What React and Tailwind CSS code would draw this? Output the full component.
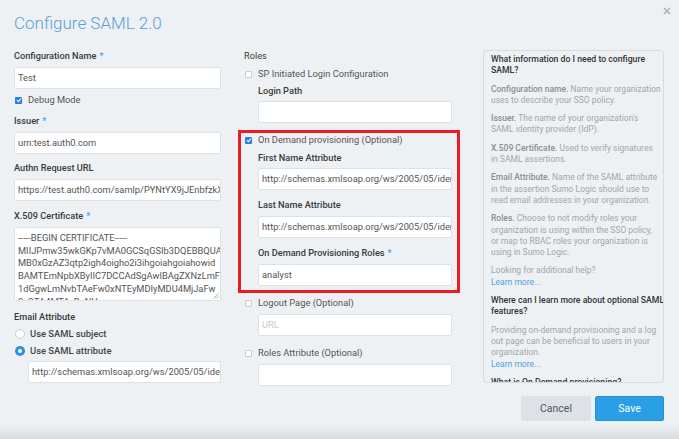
import React from 'react';

const font = { fontFamily: 'Roboto, "Liberation Sans", sans-serif' };

function Label({ children, required, className = '' }) {
  return (
    <div className={`h-[12px] leading-[12px] text-[9.2px] font-medium text-[#3a3a3a] whitespace-nowrap ${className}`}>
      {children}
      {required && <span className="text-[#4aa3e8] ml-[3px]">*</span>}
    </div>
  );
}

function Input({ value, placeholder, className = '' }) {
  return (
    <div className={`h-[22px] bg-white border border-[#dde2e6] rounded-[2px] px-[3px] flex items-center overflow-hidden ${className}`}>
      {value ? (
        <span className="text-[9.3px] text-[#555] whitespace-nowrap">{value}</span>
      ) : (
        <span className="text-[9.3px] text-[#c8cbce] whitespace-nowrap">{placeholder}</span>
      )}
    </div>
  );
}

function Check({ checked, children, className = '' }) {
  return (
    <div className={`h-[12px] flex items-center gap-[6px] ${className}`}>
      {checked ? (
        <span className="w-[7px] h-[7px] rounded-[1px] bg-[#2d7fe3] flex items-center justify-center">
          <svg width="6" height="6" viewBox="0 0 6 6">
            <path d="M1 3.2 L2.4 4.6 L5 1.5" stroke="white" strokeWidth="1.1" fill="none" />
          </svg>
        </span>
      ) : (
        <span className="w-[7px] h-[7px] rounded-[1px] bg-white border border-[#c9cdd1]" />
      )}
      <span className="text-[9.3px] text-[#555] leading-[12px] whitespace-nowrap">{children}</span>
    </div>
  );
}

function Radio({ checked, children, className = '' }) {
  return (
    <div className={`h-[12px] flex items-center gap-[5px] pl-[1px] ${className}`}>
      {checked ? (
        <span className="w-[10px] h-[10px] rounded-full bg-[#2d8fe8] flex items-center justify-center">
          <span className="w-[4px] h-[4px] rounded-full bg-white" />
        </span>
      ) : (
        <span className="w-[10px] h-[10px] rounded-full bg-white border border-[#c9cdd1]" />
      )}
      <span className="text-[9.4px] font-medium text-[#444] leading-[12px] whitespace-nowrap">{children}</span>
    </div>
  );
}

const SCHEMA = 'http://schemas.xmlsoap.org/ws/2005/05/identity/claims/name';

function LeftColumn() {
  return (
    <div className="w-[207px] flex flex-col">
      <Label required>Configuration Name</Label>
      <Input value="Test" className="mt-[5px]" />
      <Check checked className="mt-[5px] ml-[1px]">Debug Mode</Check>
      <Label required className="mt-[9px]">Issuer</Label>
      <Input value="urn:test.auth0.com" className="mt-[5px]" />
      <Label className="mt-[8px]">Authn Request URL</Label>
      <Input value="https://test.auth0.com/samlp/PYNtYX9jJEnbfzkXyZ" className="mt-[5px]" />
      <Label required className="mt-[9px]">X.509 Certificate</Label>
      <div className="relative mt-[5px] h-[74px] bg-white border border-[#dde2e6] rounded-[2px] pl-[3px] pt-[4px] overflow-hidden">
        <div className="text-[9.3px] leading-[12.7px] text-[#555] whitespace-nowrap">
          -----BEGIN CERTIFICATE-----<br />
          MIIJPmw35wkGKp7vMA0GCSqGSIb3DQEBBQUA<br />
          MB0xGzAZ3qtp2igh4oigho2i3ihgoiahgoiahowid<br />
          BAMTEmNpbXByIIC7DCCAdSgAwIBAgZXNzLmF<br />
          1dGgwLmNvbTAeFw0xNTEyMDIyMDU4MjJaFw<br />
          0yOTA4MTAyBgNV
        </div>
        <svg className="absolute right-[1px] bottom-[1px]" width="6" height="6" viewBox="0 0 6 6">
          <path d="M0.5 5.5 L5.5 0.5 M3 5.5 L5.5 3" stroke="#999" strokeWidth="0.8" />
        </svg>
      </div>
      <Label className="mt-[10px]">Email Attribute</Label>
      <Radio className="mt-[5px]">Use SAML subject</Radio>
      <Radio checked className="mt-[5px]">Use SAML attribute</Radio>
      <Input value={SCHEMA} className="mt-[4px] ml-[14px]" />
    </div>
  );
}

function MiddleColumn() {
  return (
    <div className="w-[208px] flex flex-col">
      <Label className="font-normal">Roles</Label>
      <Check className="mt-[6px] ml-[1px]">SP Initiated Login Configuration</Check>
      <Label className="mt-[5px] ml-[14px]">Login Path</Label>
      <Input className="mt-[4px] ml-[14px]" />
      <div className="mt-[7px] ml-[-6px] mr-[-8px] border-[3px] border-[#ea1c24] pl-[3px] pr-[5px] pt-[1px] pb-[4px] flex flex-col">
        <Check checked className="ml-[1px]">On Demand provisioning (Optional)</Check>
        <Label className="mt-[6px] ml-[14px]">First Name Attribute</Label>
        <Input value={SCHEMA} className="mt-[4px] ml-[14px]" />
        <Label className="mt-[9px] ml-[14px]">Last Name Attribute</Label>
        <Input value={SCHEMA} className="mt-[5px] ml-[14px]" />
        <Label required className="mt-[9px] ml-[14px]">On Demand Provisioning Roles</Label>
        <Input value="analyst" className="mt-[5px] ml-[14px]" />
      </div>
      <Check className="mt-[4px] ml-[1px]">Logout Page (Optional)</Check>
      <Input placeholder="URL" className="mt-[5px] ml-[14px]" />
      <Check className="mt-[11px] ml-[1px]">Roles Attribute (Optional)</Check>
      <Input className="mt-[5px] ml-[14px]" />
    </div>
  );
}

function HelpPanel() {
  const b = 'font-medium text-[#8a8e93]';
  const h = 'font-medium text-[#333] text-[8.7px]';
  const link = 'text-[#4aa3e8]';
  return (
    <div className="w-[181px] h-[333px] border border-[#d6dbe0] rounded-[4px] overflow-hidden pl-[7px] pr-[4px] pt-[3px]">
      <div className="text-[8.5px] leading-[11.3px] text-[#a2a6ab] whitespace-nowrap">
        <p className={h}>What information do I need to configure<br />SAML?</p>
        <p className="mt-[7px]"><span className={b}>Configuration name.</span> Name your organization<br />uses to describe your SSO policy.</p>
        <p className="mt-[7px]"><span className={b}>Issuer.</span> The name of your organization's<br />SAML identity provider (IdP).</p>
        <p className="mt-[7px]"><span className={b}>X.509 Certificate.</span> Used to verify signatures<br />in SAML assertions.</p>
        <p className="mt-[7px]"><span className={b}>Email Attribute.</span> Name of the SAML attribute<br />in the assertion Sumo Logic should use to<br />read email addresses in your organization.</p>
        <p className="mt-[7px]"><span className={b}>Roles.</span> Choose to not modify roles your<br />organization is using within the SSO policy,<br />or map to RBAC roles your organization is<br />using in Sumo Logic.</p>
        <p className="mt-[7px]">Looking for additional help?<br /><span className={link}>Learn more...</span></p>
        <p className={`mt-[7px] ${h}`}>Where can I learn more about optional SAML<br />features?</p>
        <p className="mt-[7px]">Providing on-demand provisioning and a log<br />out page can be beneficial to users in your<br />organization.<br /><span className={link}>Learn more...</span></p>
        <p className={`mt-[7px] ${h}`}>What is On Demand provisioning?</p>
      </div>
    </div>
  );
}

export default function App() {
  return (
    <div style={font} className="relative w-[679px] h-[439px] bg-[#eef1f3] overflow-hidden flex flex-col">
      <button className="absolute top-[6px] right-[8px] w-[9px] h-[9px] flex items-center justify-center">
        <svg width="8" height="8" viewBox="0 0 8 8">
          <path d="M1 1 L7 7 M7 1 L1 7" stroke="#a7abaf" strokeWidth="1.4" />
        </svg>
      </button>
      <div className="pl-[14px] pt-[12px] h-[34px]">
        <h1 className="text-[17px] leading-[22px] font-light text-[#5a9fd8]">Configure SAML 2.0</h1>
      </div>
      <div className="mt-[16px] pl-[14px] flex">
        <LeftColumn />
        <div className="ml-[23px]">
          <MiddleColumn />
        </div>
        <div className="ml-[31px]">
          <HelpPanel />
        </div>
      </div>
      <div className="mt-[10px] pr-[15px] flex justify-end gap-[4px]">
        <button className="w-[70px] h-[25px] bg-[#dce2e8] rounded-[2px] text-[10.5px] text-[#555]">Cancel</button>
        <button className="w-[69px] h-[25px] bg-[#2a9fe5] border border-[#2390d6] rounded-[2px] text-[10.5px] text-white">Save</button>
      </div>
      <div className="mt-auto h-[14px] bg-gradient-to-b from-[#eef1f3] to-[#dadde0]" />
    </div>
  );
}
